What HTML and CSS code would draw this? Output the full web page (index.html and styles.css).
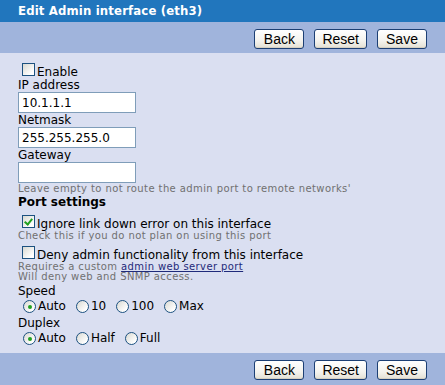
FILE: index.html
```html
<!DOCTYPE html>
<html lang="en">
<head>
    <meta charset="UTF-8">
    <title>Edit Admin interface</title>
    <link rel="stylesheet" href="styles.css">
</head>
<body>
    <div class="title">Edit Admin interface (eth3)</div>
    <div class="toolbar">
        <button type="button">Back</button>
        <button type="button">Reset</button>
        <button type="button">Save</button>
    </div>
    <form class="content">
        <div class="check-row">
            <input type="checkbox" id="enable">
            <label for="enable">Enable</label>
        </div>
        <div class="field">
            <label for="ip">IP address</label>
            <input type="text" id="ip" value="10.1.1.1">
        </div>
        <div class="field">
            <label for="mask">Netmask</label>
            <input type="text" id="mask" value="255.255.255.0">
        </div>
        <div class="field">
            <label for="gw">Gateway</label>
            <input type="text" id="gw" value="">
        </div>
        <p class="hint">Leave empty to not route the admin port to remote networks'</p>
        <div class="section">Port settings</div>
        <div class="check-row">
            <input type="checkbox" id="ignore" checked>
            <label for="ignore">Ignore link down error on this interface</label>
        </div>
        <p class="hint">Check this if you do not plan on using this port</p>
        <div class="check-row">
            <input type="checkbox" id="deny">
            <label for="deny">Deny admin functionality from this interface</label>
        </div>
        <p class="hint">Requires a custom <a href="#">admin web server port</a><br>Will deny web and SNMP access.</p>
        <div class="group-label">Speed</div>
        <div class="radios">
            <label><input type="radio" name="speed" checked>Auto</label>
            <label><input type="radio" name="speed">10</label>
            <label><input type="radio" name="speed">100</label>
            <label><input type="radio" name="speed">Max</label>
        </div>
        <div class="group-label">Duplex</div>
        <div class="radios">
            <label><input type="radio" name="duplex" checked>Auto</label>
            <label><input type="radio" name="duplex">Half</label>
            <label><input type="radio" name="duplex">Full</label>
        </div>
    </form>
    <div class="toolbar bottom">
        <button type="button">Back</button>
        <button type="button">Reset</button>
        <button type="button">Save</button>
    </div>
</body>
</html>
```
FILE: styles.css
```css
body {
    margin: 0;
    height: 385px;
    display: flex;
    flex-direction: column;
    font-family: "DejaVu Sans", Verdana, sans-serif;
    font-size: 12px;
    color: #000;
    background-color: #dadff1;
    overflow: hidden;
}

.title {
    height: 22px;
    line-height: 22px;
    padding-left: 18px;
    background-color: #2176bd;
    color: #fff;
    font-family: "DejaVu Sans Condensed", "DejaVu Sans", sans-serif;
    font-weight: bold;
    font-size: 13px;
    letter-spacing: 0.15px;
}

.toolbar {
    height: 31px;
    box-sizing: border-box;
    padding: 7px 18px 0 0;
    display: flex;
    justify-content: flex-end;
    align-items: flex-start;
    gap: 10px;
    background-color: #a0b4dc;
}

.toolbar.bottom {
    height: 32px;
}

.toolbar button {
    height: 20px;
    min-width: 50px;
    padding: 0 7px;
    border: 1px solid #1c3f74;
    border-radius: 3px;
    background: linear-gradient(#ffffff, #f4f3ee 60%, #e3e0d4);
    box-shadow: inset 0 -1px 0 #d6d0c2;
    font-family: "Liberation Sans", Arial, sans-serif;
    font-size: 14px;
    color: #000;
}

.content {
    flex: 1;
    margin: 0;
    padding: 10px 18px 0;
}

/* checkbox rows */
.check-row {
    display: flex;
    align-items: baseline;
    height: 16px;
}

.check-row label {
    line-height: 16px;
}

.check-row input,
.radios input {
    -webkit-appearance: none;
    appearance: none;
    margin: 0;
    position: relative;
    background: linear-gradient(135deg, #d9d9d2, #ffffff 80%);
    border: 1px solid #1c5180;
}

.check-row input {
    width: 13px;
    height: 13px;
    margin: 0 2px -1px 4px;
}

.check-row input:checked::after {
    content: "";
    position: absolute;
    left: 3px;
    top: 1px;
    width: 3px;
    height: 6px;
    border: solid #21a121;
    border-width: 0 2px 2px 0;
    transform: rotate(40deg);
}

.section + .check-row,
.hint + .check-row {
    margin-top: 5px;
}

.field label {
    display: block;
    line-height: 13px;
}

.field input {
    display: block;
    width: 118px;
    height: 21px;
    box-sizing: border-box;
    margin: 0 0 1px;
    padding: 0 3px;
    border: 1px solid #7f9db9;
    background: #fff;
    font-family: "DejaVu Sans", Verdana, sans-serif;
    font-size: 12px;
}

.hint {
    margin: 0;
    font-size: 10px;
    line-height: 10px;
    letter-spacing: 0.4px;
    color: #707070;
}

.hint a {
    color: #1f2a7a;
}

.section {
    font-weight: bold;
    font-size: 12px;
    line-height: 15px;
    margin-top: 1px;
}

.group-label {
    line-height: 15px;
    margin-top: 2px;
}

.radios {
    display: flex;
    gap: 10px;
    padding-left: 5px;
    line-height: 15px;
}

.radios label {
    display: flex;
    align-items: center;
}

.radios input {
    width: 13px;
    height: 13px;
    border-radius: 50%;
    margin-right: 2px;
}

.radios input:checked::after {
    content: "";
    position: absolute;
    left: 3.5px;
    top: 3.5px;
    width: 4px;
    height: 4px;
    border-radius: 50%;
    background: #21a121;
}
```
